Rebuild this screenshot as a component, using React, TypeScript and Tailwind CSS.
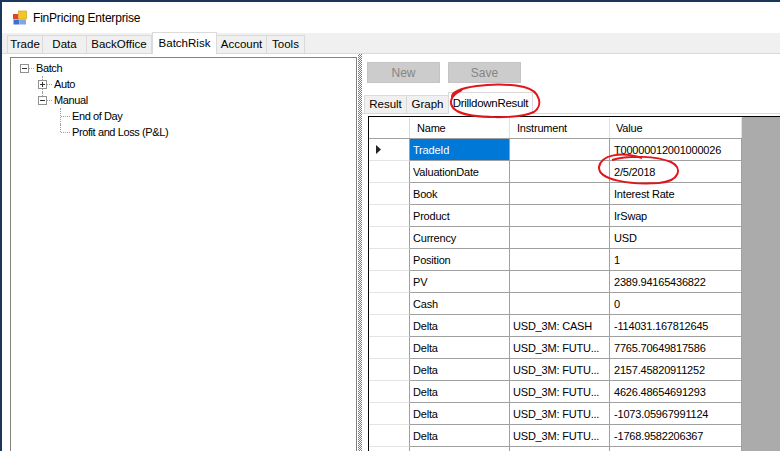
import React from "react";

type Row = { name: string; inst: string; value: string };

const rows: Row[] = [
  { name: "TradeId", inst: "", value: "T00000012001000026" },
  { name: "ValuationDate", inst: "", value: "2/5/2018" },
  { name: "Book", inst: "", value: "Interest Rate" },
  { name: "Product", inst: "", value: "IrSwap" },
  { name: "Currency", inst: "", value: "USD" },
  { name: "Position", inst: "", value: "1" },
  { name: "PV", inst: "", value: "2389.94165436822" },
  { name: "Cash", inst: "", value: "0" },
  { name: "Delta", inst: "USD_3M: CASH", value: "-114031.167812645" },
  { name: "Delta", inst: "USD_3M: FUTU...", value: "7765.70649817586" },
  { name: "Delta", inst: "USD_3M: FUTU...", value: "2157.45820911252" },
  { name: "Delta", inst: "USD_3M: FUTU...", value: "4626.48654691293" },
  { name: "Delta", inst: "USD_3M: FUTU...", value: "-1073.05967991124" },
  { name: "Delta", inst: "USD_3M: FUTU...", value: "-1768.9582206367" },
  // only the top edge of this row is on screen
  { name: "", inst: "", value: "" },
];

const topTabs = [
  { label: "Trade", w: "w-[36px]" },
  { label: "Data", w: "w-[44px]" },
  { label: "BackOffice", w: "w-[65px]" },
  { label: "BatchRisk", w: "w-[65px]", active: true },
  { label: "Account", w: "w-[50px]" },
  { label: "Tools", w: "w-[38px]" },
];

const innerTabs = [
  { label: "Result", w: "w-[42px]" },
  { label: "Graph", w: "w-[42px]" },
  { label: "DrilldownResult", w: "w-[85px]", active: true },
];

type CellProps = { v?: "full" | "top"; h?: boolean; box?: "plus" | "minus" };

// one 18px indent slot of the tree, with its dotted connectors
const TreeCell = ({ v, h, box }: CellProps) => (
  <div className="relative h-[16px] w-[18px] shrink-0">
    {v === "full" && (
      <div className="absolute left-[8px] top-0 bottom-0 border-l border-dotted border-[#a0a0a0]" />
    )}
    {v === "top" && (
      <div className="absolute left-[8px] top-0 h-[8px] border-l border-dotted border-[#a0a0a0]" />
    )}
    {h && (
      <div className="absolute left-[9px] right-0 top-[8px] border-t border-dotted border-[#a0a0a0]" />
    )}
    {box && (
      <div className="absolute left-[4px] top-[4px] flex h-[9px] w-[9px] items-center justify-center border border-[#919191] bg-white">
        <div className="h-px w-[5px] bg-[#333]" />
        {box === "plus" && <div className="absolute left-[3px] top-[1px] h-[5px] w-px bg-[#333]" />}
      </div>
    )}
  </div>
);

const treeRows: { label: string; cells: CellProps[] }[] = [
  { label: "Batch", cells: [{ h: true, box: "minus" }] },
  { label: "Auto", cells: [{}, { v: "full", h: true, box: "plus" }] },
  { label: "Manual", cells: [{}, { v: "top", h: true, box: "minus" }] },
  { label: "End of Day", cells: [{}, {}, { v: "full", h: true }] },
  { label: "Profit and Loss (P&L)", cells: [{}, {}, { v: "top", h: true }] },
];

const AppIcon = () => (
  <svg width="16" height="16" viewBox="0 0 16 16">
    <rect x="1" y="4" width="5" height="5" fill="#e0452b" />
    <rect x="6.5" y="1" width="8" height="8" fill="#f3c623" stroke="#c99a10" strokeWidth="0.6" />
    <rect x="1.5" y="9.5" width="6" height="5" fill="#3f6fd0" />
    <rect x="8" y="9.5" width="6" height="5" fill="#7fa6e8" />
  </svg>
);

export default function App() {
  return (
    <div className="relative flex h-[451px] w-[780px] flex-col overflow-hidden border-l-2 border-t-2 border-[#1b365d] bg-white font-['Liberation_Sans',Arial,sans-serif] text-black">
      {/* title bar */}
      <div className="flex h-[31px] shrink-0 items-center gap-[5px] pl-[10px]">
        <AppIcon />
        <span className="text-[12px] tracking-[-0.2px]">FinPricing Enterprise</span>
      </div>

      {/* main tabs */}
      <div className="flex h-[21px] shrink-0 items-end border-b border-[#dadada] bg-[#f0f0f0] pl-[5px] text-[11.5px]">
        {topTabs.map((t) =>
          t.active ? (
            <div
              key={t.label}
              className={`-mb-px flex h-[22px] items-center justify-center border border-b-0 border-[#dadada] bg-white ${t.w}`}
            >
              {t.label}
            </div>
          ) : (
            <div
              key={t.label}
              className={`flex h-[18px] items-center justify-center border border-b-0 border-l-0 border-[#dadada] bg-[#f0f0f0] first:border-l ${t.w}`}
            >
              {t.label}
            </div>
          )
        )}
      </div>

      {/* tab page */}
      <div className="flex min-h-0 flex-1">
        {/* tree */}
        <div className="ml-[8px] mt-[3px] h-[420px] w-[347px] shrink-0 border border-[#828282] pl-[5px] pt-[2px] text-[11px] tracking-[-0.4px]">
          {treeRows.map((r) => (
            <div key={r.label} className="flex h-[16px] items-center">
              {r.cells.map((c, i) => (
                <TreeCell key={i} {...c} />
              ))}
              <span className="ml-[2px] leading-none">{r.label}</span>
            </div>
          ))}
        </div>

        {/* splitter */}
        <div className="ml-[1px] w-[4px] shrink-0 bg-[image:repeating-conic-gradient(#7d7d7d_0_25%,#ffffff_0_50%)] bg-[length:2px_2px]" />

        {/* right side */}
        <div className="flex min-w-0 flex-1 flex-col">
          <div className="flex gap-[8px] pl-[5px] pt-[8px] text-[12px] text-[#858585]">
            <div className="flex h-[21px] w-[73px] items-center justify-center border border-[#c4c4c4] bg-[#cccccc]">New</div>
            <div className="flex h-[21px] w-[73px] items-center justify-center border border-[#c4c4c4] bg-[#cccccc]">Save</div>
          </div>

          <div className="mt-[9px] flex h-[22px] shrink-0 items-end border-b border-[#dadada] pl-[2px] text-[11.5px]">
            {innerTabs.map((t) =>
              t.active ? (
                <div
                  key={t.label}
                  className={`-mb-px flex h-[22px] items-center justify-center border border-b-0 border-[#dadada] bg-white tracking-[-0.3px] ${t.w}`}
                >
                  {t.label}
                </div>
              ) : (
                <div
                  key={t.label}
                  className={`flex h-[18px] items-center justify-center border border-b-0 border-r-0 border-[#dadada] bg-[#f0f0f0] ${t.w}`}
                >
                  {t.label}
                </div>
              )
            )}
          </div>

          {/* data grid */}
          <div className="ml-[6px] mt-[2px] flex flex-1 border-l border-t border-black text-[11px] tracking-[-0.2px]">
            <div className="flex w-[373px] shrink-0 flex-col bg-white">
              <div className="flex h-[22px] shrink-0 border-b border-[#a0a0a0] pt-px">
                <div className="w-[41px] border-r border-[#d8d8d8]" />
                <div className="flex w-[100px] items-center border-r border-[#e2e2e2] pl-[7px]">Name</div>
                <div className="flex w-[100px] items-center border-r border-[#e2e2e2] pl-[7px]">Instrument</div>
                <div className="flex w-[132px] items-center border-r border-[#e2e2e2] pl-[6px]">Value</div>
              </div>
              {rows.map((r, i) => (
                <div key={i} className="flex h-[22px] shrink-0">
                  <div className="flex w-[41px] items-center border-b border-r border-b-[#e4e4e4] border-r-[#a0a0a0] pl-[7px]">
                    {i === 0 && (
                      <svg width="6" height="9" viewBox="0 0 6 9">
                        <path d="M0 0 L5 4.5 L0 9 Z" fill="#222" />
                      </svg>
                    )}
                  </div>
                  <div
                    className={`flex w-[100px] items-center border-b border-r border-[#a0a0a0] pl-[3px] pt-[2px] ${
                      i === 0 ? "bg-[#0078d7] text-white" : ""
                    }`}
                  >
                    {r.name}
                  </div>
                  <div className="flex w-[100px] items-center border-b border-r border-[#a0a0a0] pl-[3px] pt-[2px]">{r.inst}</div>
                  <div className="flex w-[132px] items-center border-b border-r border-[#a0a0a0] pl-[4px] pt-[2px]">{r.value}</div>
                </div>
              ))}
            </div>
            <div className="flex-1 bg-[#ababab]" />
          </div>
        </div>
      </div>

      {/* red hand-drawn annotations */}
      <svg className="pointer-events-none absolute left-[-2px] top-[-2px]" width="780" height="451" viewBox="0 0 780 451">
        <path
          d="M452 97 C451 87 495 81 524 87 C541 91 543 106 534 112 C519 119 472 119 457 111 C447 105 450 95 462 90"
          fill="none"
          stroke="#e3151c"
          strokeWidth="2"
        />
        <path
          d="M642 158 C621 151 601 155 599 167 C598 180 630 185 659 183 C680 181 683 168 671 162 C656 156 630 155 612 160"
          fill="none"
          stroke="#e3151c"
          strokeWidth="2"
        />
      </svg>
    </div>
  );
}
